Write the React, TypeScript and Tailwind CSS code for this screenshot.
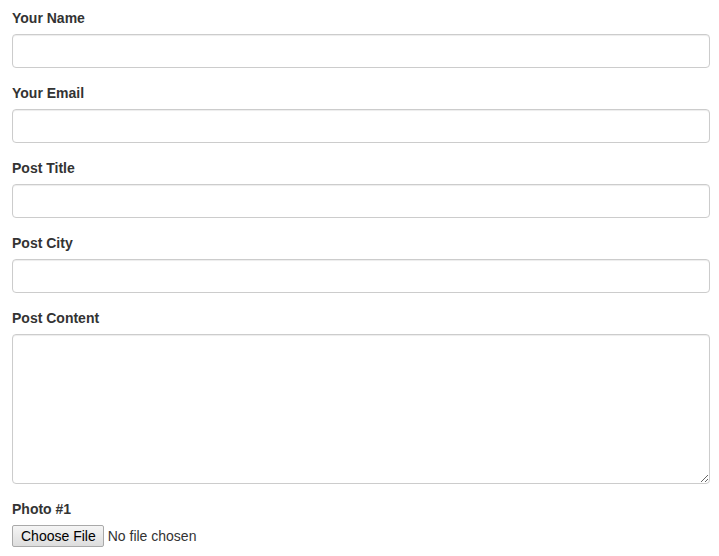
const fieldClass =
  "block w-full h-[34px] px-3 bg-white border border-[#ccc] rounded-[4px] shadow-[inset_0_1px_1px_rgba(0,0,0,0.075)] text-sm text-[#555] outline-none";

function Label({ children }: { children: React.ReactNode }) {
  return (
    <label className="block mb-[5px] text-sm leading-[21px] font-bold text-[#333]">
      {children}
    </label>
  );
}

export default function App() {
  return (
    <div className="min-h-[556px] bg-white pt-2 pl-3 pr-[9px] font-['Liberation_Sans',Arial,sans-serif] text-[#333]">
      <form className="flex flex-col gap-[15px]">
        <div>
          <Label>Your Name</Label>
          <input type="text" className={fieldClass} />
        </div>
        <div>
          <Label>Your Email</Label>
          <input type="email" className={fieldClass} />
        </div>
        <div>
          <Label>Post Title</Label>
          <input type="text" className={fieldClass} />
        </div>
        <div>
          <Label>Post City</Label>
          <input type="text" className={fieldClass} />
        </div>
        <div>
          <Label>Post Content</Label>
          <textarea className="block w-full h-[150px] px-3 py-[6px] bg-white border border-[#ccc] rounded-[4px] shadow-[inset_0_1px_1px_rgba(0,0,0,0.075)] text-sm outline-none resize" />
        </div>
        <div>
          <Label>Photo #1</Label>
          <input
            type="file"
            className="block text-sm leading-[20px] text-[#333] file:mr-1 file:h-[22px] file:pl-[8px] file:pr-[7px] file:border file:border-[#a9a9a9] file:rounded-[2px] file:bg-linear-to-b file:from-[#f5f5f5] file:to-[#dddddd] file:text-black"
          />
        </div>
      </form>
    </div>
  );
}
